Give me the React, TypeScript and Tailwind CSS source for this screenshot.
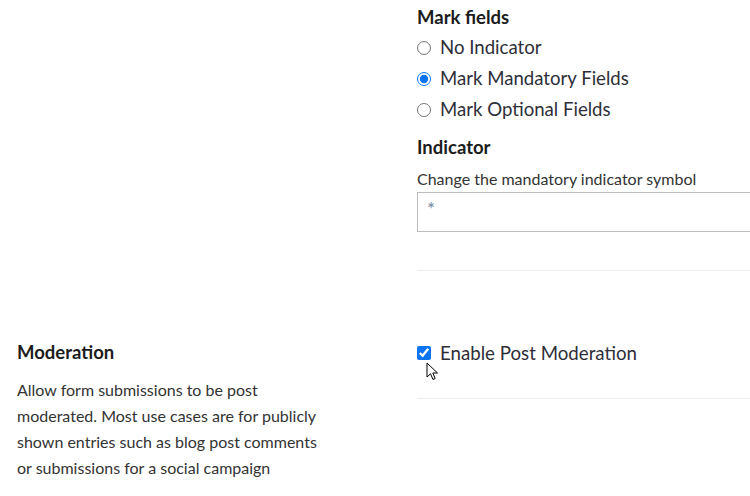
import React from "react";

function Cursor() {
  return (
    <svg width="13" height="20" viewBox="0 0 13 20" className="absolute left-[9px] top-[21px]">
      <path d="M1 1 L1 15 L4.5 11.8 L7 17.5 L9.2 16.5 L6.8 11 L11.5 11 Z" fill="#fff" stroke="#000" strokeWidth="1" strokeLinejoin="round" />
    </svg>
  );
}

export default function App() {
  const font = { fontFamily: "Lato, 'Noto Sans', sans-serif" };
  return (
    <div className="w-[750px] h-[496px] bg-white overflow-hidden relative" style={font}>
      <div className="flex">
        <div className="w-[417px] shrink-0" />
        <div className="flex-1 min-w-0">
          <div className="pt-[6px]">
            <h3 className="text-[18.5px] font-bold text-[#1c1c1c] leading-[22px]">Mark fields</h3>
            <div className="mt-[4px] flex flex-col">
              {[
                ["No Indicator", false],
                ["Mark Mandatory Fields", true],
                ["Mark Optional Fields", false],
              ].map(([label, checked]) => (
                <label key={label as string} className="flex items-center h-[31px] gap-[9px] text-[18.6px] text-[#2e2e38]">
                  <input type="radio" name="mark" defaultChecked={checked as boolean} className="w-[14px] h-[14px] m-0 accent-[#0b74f0]" />
                  <span>{label as string}</span>
                </label>
              ))}
            </div>
            <h3 className="mt-[11px] text-[18.5px] font-bold text-[#1c1c1c] leading-[22px]">Indicator</h3>
            <p className="mt-[12px] text-[16px] text-[#333] leading-[18px]">Change the mandatory indicator symbol</p>
            <div className="mt-[4px] h-[40px] w-[400px] border border-[#bdbdbd] px-[9px] pt-[6px] text-[19px] text-[#7486a0] leading-[20px]">*</div>
            <div className="mt-[38px] h-px w-[400px] bg-[#eeeeee]" />
          </div>
        </div>
      </div>

      <div className="flex mt-[70px]">
        <div className="w-[417px] shrink-0 pl-[17px]">
          <h3 className="text-[18.5px] font-bold text-[#1c1c1c] leading-[22px]">Moderation</h3>
          <p className="mt-[14px] w-[316px] text-[16px] text-[#333] leading-[26px]">
            Allow form submissions to be post moderated. Most use cases are for publicly shown entries such as blog post comments or submissions for a social campaign
          </p>
        </div>
        <div className="flex-1 min-w-0">
          <div className="relative pt-[1px]">
            <label className="flex items-center h-[22px] gap-[9px] text-[18.7px] text-[#2e2e38]">
              <input type="checkbox" defaultChecked className="w-[14px] h-[14px] m-0 accent-[#0b74f0]" />
              <span>Enable Post Moderation</span>
            </label>
            <Cursor />
          </div>
          <div className="mt-[34px] h-px w-[400px] bg-[#eeeeee]" />
        </div>
      </div>
    </div>
  );
}
